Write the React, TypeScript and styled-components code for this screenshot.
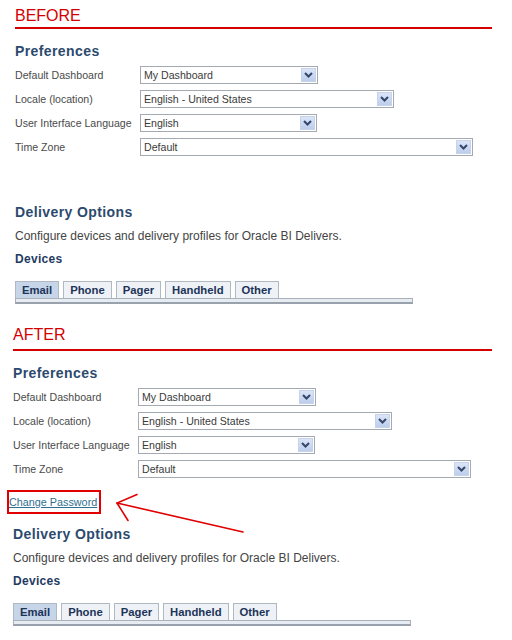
import React from "react";
import styled, { createGlobalStyle } from "styled-components";

const GlobalStyle = createGlobalStyle`
  body {
    margin: 0;
    background: #ffffff;
    font-family: "Liberation Sans", Arial, sans-serif;
  }
`;

const Page = styled.div`
  position: relative;
  width: 512px;
  height: 640px;
  overflow: hidden;
  display: flex;
  flex-direction: column;
  gap: 15px;
`;

const Section = styled.section<{ $indent: number }>`
  display: flex;
  flex-direction: column;
  margin: 0 20px 0 ${(p) => p.$indent}px;
`;

const Heading = styled.div<{ $lineGap: number }>`
  padding-top: 6px;
  padding-bottom: ${(p) => p.$lineGap}px;
  line-height: 20px;
  font-size: 16px;
  color: #d40000;
  border-bottom: 2px solid #d40000;
`;

const SectionTitle = styled.div<{ $top: number }>`
  margin-top: ${(p) => p.$top}px;
  font-size: 14px;
  font-weight: bold;
  letter-spacing: 0.4px;
  line-height: 18px;
  color: #2c4a6e;
`;

const PrefGrid = styled.div`
  margin-top: 6px;
  display: grid;
  grid-template-columns: 125px auto;
  row-gap: 6px;
  align-items: center;
`;

const Label = styled.div`
  font-size: 10.6px;
  color: #4a4a4a;
`;

const SelectBox = styled.div<{ $width: number }>`
  box-sizing: border-box;
  width: ${(p) => p.$width}px;
  height: 18px;
  padding: 0 1px 0 3px;
  border: 1px solid #a3aab2;
  background: #fff;
  display: flex;
  align-items: center;
  justify-content: space-between;
  font-size: 10.6px;
  color: #3a3a3a;
`;

const ArrowButton = styled.div`
  box-sizing: border-box;
  width: 15px;
  height: 14px;
  border: 1px solid #c6d3ea;
  background: linear-gradient(#dbe5f7, #bccdec);
  display: flex;
  align-items: center;
  justify-content: center;
`;

const LinkSlot = styled.div`
  margin-top: 12px;
  height: 24px;
  display: flex;
  align-items: center;
`;

const LinkBox = styled.div`
  box-sizing: border-box;
  height: 24px;
  margin-left: -6px;
  padding: 0 2px 0 0;
  border: 2px solid #e00000;
  display: flex;
  align-items: center;
`;

const ChangeLink = styled.a`
  font-size: 10.8px;
  color: #2f6f8f;
  text-decoration: underline;
`;

const Description = styled.div`
  margin-top: 7px;
  font-size: 12px;
  line-height: 16px;
  color: #444;
`;

const SubTitle = styled.div`
  margin-top: 7px;
  font-size: 12px;
  font-weight: bold;
  letter-spacing: 0.3px;
  line-height: 16px;
  color: #1f3b63;
`;

const TabRow = styled.div`
  margin-top: 14px;
  display: flex;
  gap: 4px;
`;

const Tab = styled.div<{ $active?: boolean }>`
  box-sizing: border-box;
  height: 17px;
  padding: 0 6px;
  border: 1px solid #b0b8c2;
  border-bottom: none;
  background: ${(p) => (p.$active ? "#c6d5e8" : "#eef2f7")};
  font-size: 11.3px;
  font-weight: bold;
  line-height: 16px;
  color: #1c3459;
`;

const Strip = styled.div`
  box-sizing: border-box;
  width: 398px;
  height: 6px;
  border: 1px solid #a9b1bb;
  border-bottom: 2px solid #98a1ac;
  background: #e7ecf3;
`;

const Annotation = styled.svg`
  position: absolute;
  top: 0;
  left: 0;
  pointer-events: none;
`;

const prefs = [
  { label: "Default Dashboard", value: "My Dashboard", width: 178 },
  { label: "Locale (location)", value: "English - United States", width: 254 },
  { label: "User Interface Language", value: "English", width: 177 },
  { label: "Time Zone", value: "Default", width: 333 },
];

const tabs = ["Email", "Phone", "Pager", "Handheld", "Other"];

const Chevron = () => (
  <svg width="9" height="6" viewBox="0 0 9 6">
    <path d="M1 1 L4.5 4.5 L8 1" fill="none" stroke="#34466a" strokeWidth="2" />
  </svg>
);

const SettingsPanel = ({
  title,
  indent,
  lineGap,
  showLink,
}: {
  title: string;
  indent: number;
  lineGap: number;
  showLink?: boolean;
}) => (
  <Section $indent={indent}>
    <Heading $lineGap={lineGap}>{title}</Heading>
    <SectionTitle $top={13}>Preferences</SectionTitle>
    <PrefGrid>
      {prefs.map((p) => (
        <React.Fragment key={p.label}>
          <Label>{p.label}</Label>
          <SelectBox $width={p.width}>
            <span>{p.value}</span>
            <ArrowButton>
              <Chevron />
            </ArrowButton>
          </SelectBox>
        </React.Fragment>
      ))}
    </PrefGrid>
    <LinkSlot>
      {showLink && (
        <LinkBox>
          <ChangeLink href="#">Change Password</ChangeLink>
        </LinkBox>
      )}
    </LinkSlot>
    <SectionTitle $top={11}>Delivery Options</SectionTitle>
    <Description>Configure devices and delivery profiles for Oracle BI Delivers.</Description>
    <SubTitle>Devices</SubTitle>
    <TabRow>
      {tabs.map((t, i) => (
        <Tab key={t} $active={i === 0}>
          {t}
        </Tab>
      ))}
    </TabRow>
    <Strip />
  </Section>
);

export default function App() {
  return (
    <Page>
      <GlobalStyle />
      <SettingsPanel title="BEFORE" indent={15} lineGap={1} />
      <SettingsPanel title="AFTER" indent={13} lineGap={4} showLink />
      <Annotation width="512" height="640" viewBox="0 0 512 640">
        <g fill="none" stroke="#e00000" strokeWidth="1.6" strokeLinecap="round">
          <path d="M243 532 L117 503" />
          <path d="M137 494.5 L117 503 L128 520.5" />
        </g>
      </Annotation>
    </Page>
  );
}
